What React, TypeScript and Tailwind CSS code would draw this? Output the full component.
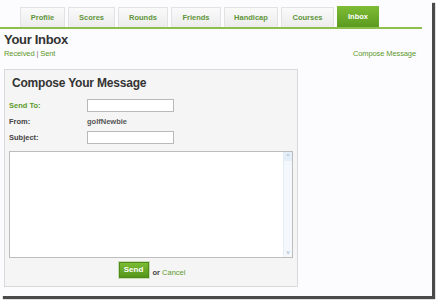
import React from 'react';

const tabs = [
  { label: 'Profile', w: 'w-[45px]' },
  { label: 'Scores', w: 'w-[47px]' },
  { label: 'Rounds', w: 'w-[50px]' },
  { label: 'Friends', w: 'w-[50px]' },
  { label: 'Handicap', w: 'w-[54px]' },
  { label: 'Courses', w: 'w-[53px]' },
];

export default function App() {
  return (
    <div className="w-[436px] h-[301px] bg-white font-['Liberation_Sans',sans-serif]">
      <div className="relative w-[432px] h-[296px] bg-[#fcfbfd] shadow-[3px_3px_1px_#4a4a4a] overflow-hidden">
        {/* Tabs */}
        <div className="flex items-end gap-[3px] pl-[20px] pt-[7px] h-[27px]">
          {tabs.map((t) => (
            <div
              key={t.label}
              className={`${t.w} h-[20px] flex items-center justify-center border border-b-0 border-[#e2e2e2] bg-gradient-to-b from-[#fafafa] to-[#ececec] text-[7.5px] font-bold text-[#5f953a]`}
            >
              {t.label}
            </div>
          ))}
          <div className="w-[42px] h-[21px] flex items-center justify-center bg-gradient-to-b from-[#7fbd36] to-[#5a9a1e] text-[7.5px] font-bold text-white">
            Inbox
          </div>
        </div>
        <div className="w-[422px] h-[2px] bg-[#8dbf4c]" />

        {/* Header */}
        <div className="px-[4px] pt-[3px]">
          <div className="text-[13px] font-bold text-[#333] leading-[16px] tracking-[-0.3px]">Your Inbox</div>
          <div className="flex justify-between pr-[12px] mt-[1px] text-[7.5px] leading-[10px] tracking-[-0.1px] text-[#5c9a2c]">
            <div>
              Received <span className="text-[#777]">|</span> Sent
            </div>
            <div>Compose Message</div>
          </div>
        </div>

        {/* Compose box */}
        <div className="ml-[4px] mt-[10px] w-[294px] h-[218px] border border-[#d9d9d9] bg-[#f5f5f5] px-[4px] pt-[5px]">
          <div className="pl-[3px] text-[12px] font-bold text-[#333] leading-[16px] tracking-[-0.2px]">
            Compose Your Message
          </div>
          <div className="mt-[8px] flex items-center h-[13px]">
            <div className="w-[78px] text-[7.5px] font-bold text-[#5c9a2c]">Send To:</div>
            <div className="w-[87px] h-[13px] bg-white border border-[#b9b9b9]" />
          </div>
          <div className="mt-[4px] flex items-center h-[12px]">
            <div className="w-[78px] text-[7.5px] font-bold text-[#444]">From:</div>
            <div className="text-[7.5px] font-bold text-[#555]">golfNewbie</div>
          </div>
          <div className="mt-[3px] flex items-center h-[13px]">
            <div className="w-[78px] text-[7.5px] font-bold text-[#444]">Subject:</div>
            <div className="w-[87px] h-[13px] bg-white border border-[#b9b9b9]" />
          </div>
          <div className="mt-[7px] flex w-[284px] h-[107px] bg-white border border-[#bdbdbd]">
            <div className="flex-1" />
            <div className="w-[9px] flex flex-col justify-between bg-[#f4f8fc] border-l border-[#e4ecf4]">
              <div className="h-[9px] flex items-center justify-center bg-[#e4eef8] text-[6px] text-[#8aa4c0]">^</div>
              <div className="h-[9px] flex items-center justify-center text-[6px] text-[#8aa4c0]">v</div>
            </div>
          </div>
          <div className="mt-[4px] flex items-end justify-center gap-[4px] pl-[2px]">
            <div className="w-[30px] h-[16px] flex items-center justify-center bg-gradient-to-b from-[#7cbc34] to-[#55961a] border border-[#4d8a1a] outline outline-1 outline-[#c9dcb5] text-[8px] font-bold text-white">
              Send
            </div>
            <div className="text-[7.5px] leading-[10px] text-[#444]">
              <span className="font-bold">or</span> <span className="text-[#5c9a2c]">Cancel</span>
            </div>
          </div>
        </div>
      </div>
    </div>
  );
}
